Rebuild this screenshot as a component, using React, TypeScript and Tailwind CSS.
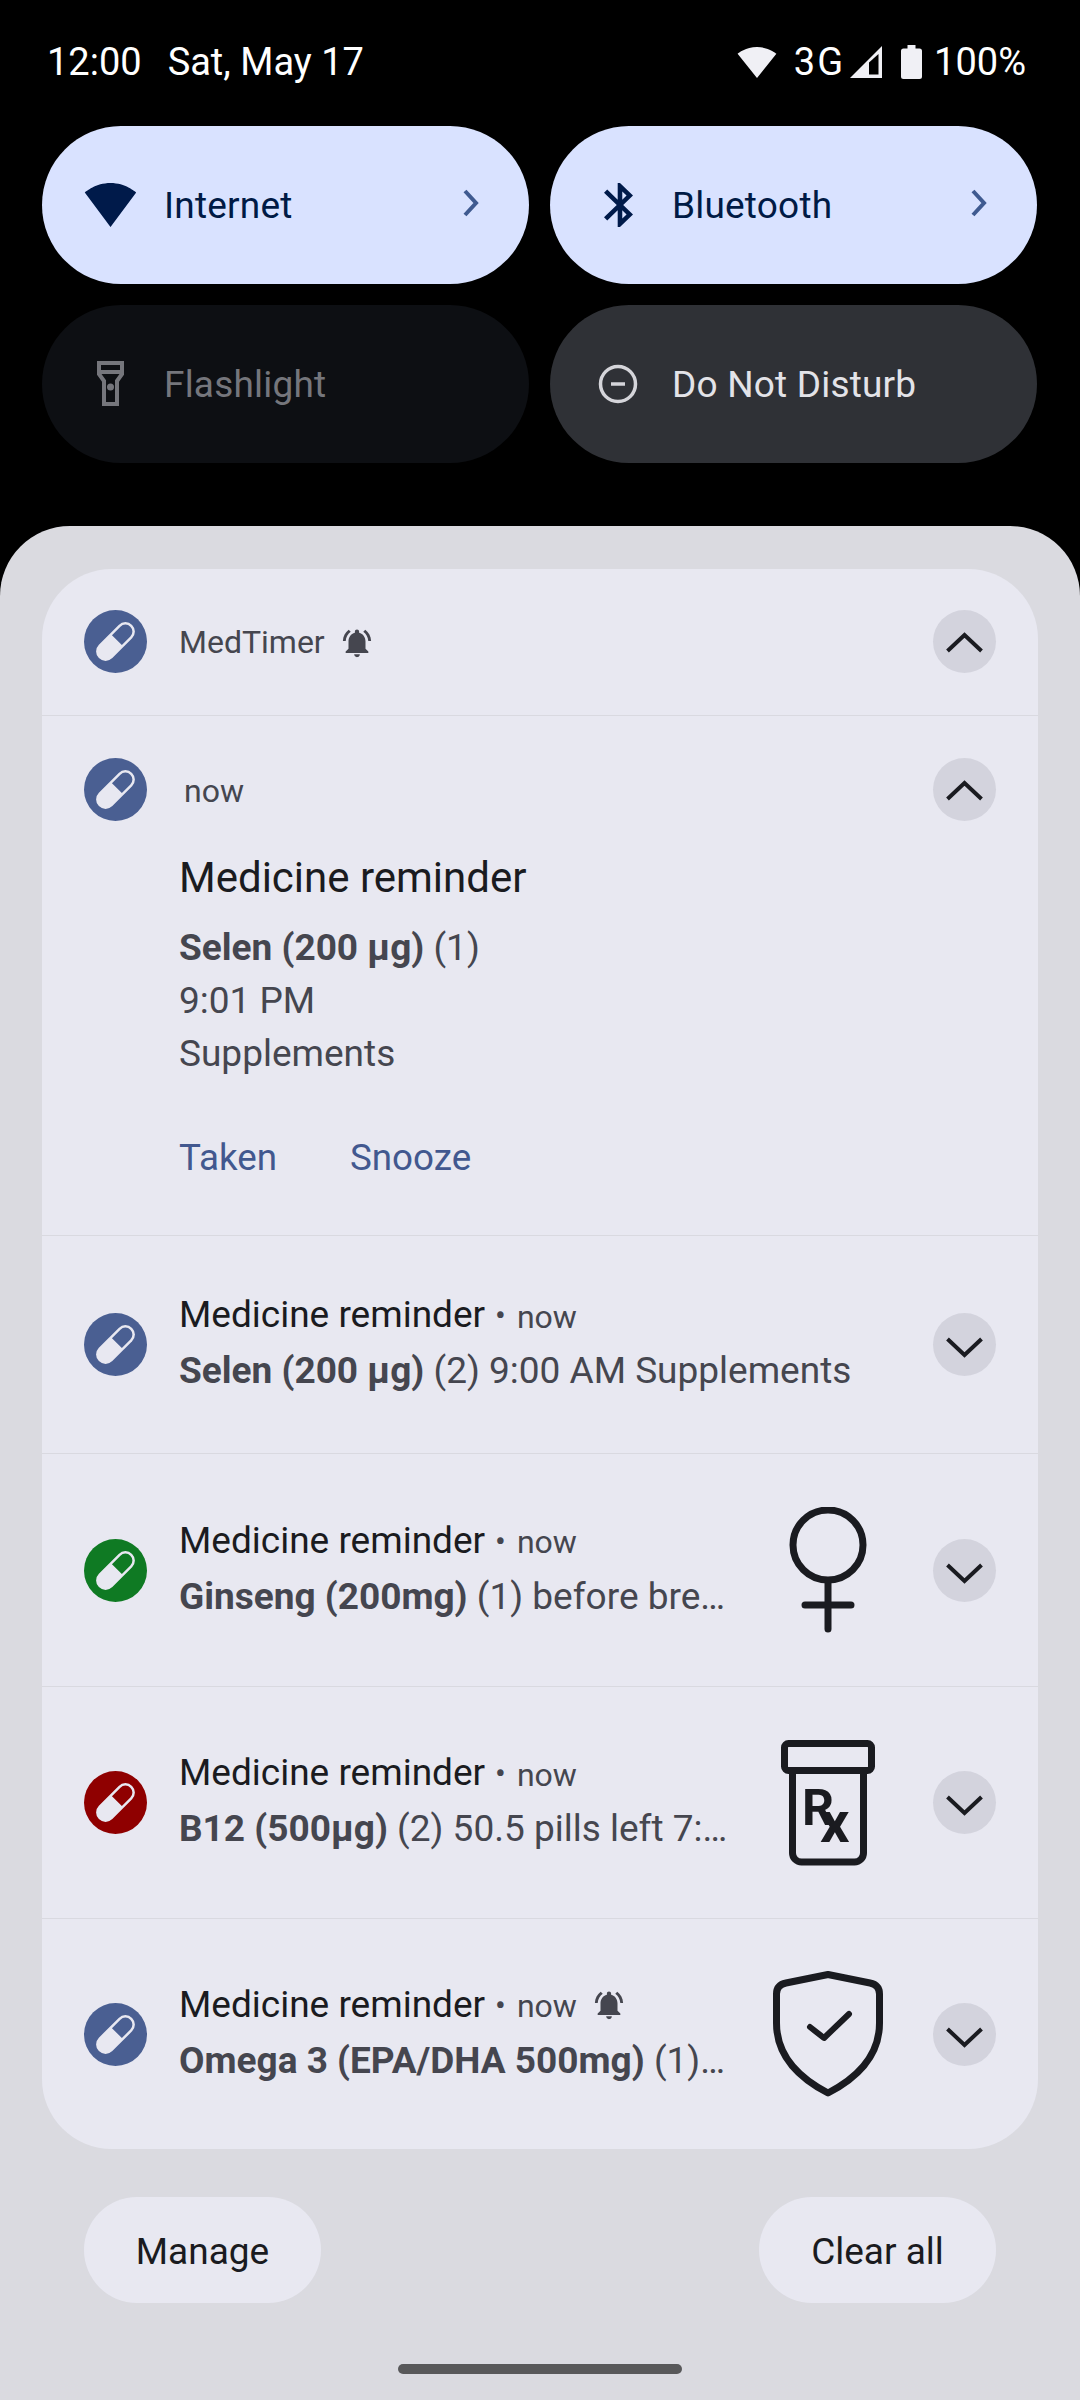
import React from "react";

function Pill({ bg }: { bg: string }) {
  return (
    <svg width="63" height="63" viewBox="0 0 63 63" className="shrink-0 block">
      <circle cx="31.5" cy="31.5" r="31.5" fill={bg} />
      <g transform="rotate(-45 31.5 31.5)">
        <rect x="8" y="22" width="47" height="19" rx="9.5" fill="#e8e8f1" />
        <path d="M33.5 24.5 H45.5 a7 7 0 0 1 0 14 H33.5 Z" fill={bg} />
      </g>
    </svg>
  );
}

function Bell({ size, className }: { size: number; className?: string }) {
  return (
    <svg width={size} height={size} viewBox="0 0 24 24" fill="#45464f" className={className}>
      <path d="M7.58 4.08L6.15 2.65C3.75 4.48 2.17 7.3 2.03 10.5h2c.15-2.65 1.51-4.97 3.55-6.42zm12.39 6.42h2c-.15-3.2-1.73-6.02-4.12-7.85l-1.42 1.43c2.02 1.45 3.39 3.77 3.54 6.42zM18 11c0-3.07-1.64-5.64-4.5-6.32V4c0-.83-.67-1.5-1.5-1.5s-1.5.67-1.5 1.5v.68C7.63 5.36 6 7.92 6 11v5l-2 2v1h16v-1l-2-2v-5zm-6 11c.14 0 .27-.01.4-.04.65-.14 1.18-.58 1.44-1.18.1-.24.15-.5.15-.78h-4c.01 1.1.9 2 2.01 2z" />
    </svg>
  );
}

function Chevron({ up }: { up?: boolean }) {
  return (
    <div className="w-[63px] h-[63px] rounded-full bg-[#d3d3dd] shrink-0 flex items-center justify-center">
      <svg width="63" height="63" viewBox="0 0 63 63" fill="none" stroke="#1a1b20" strokeWidth="4">
        <polyline points={up ? "14.5,41 31.5,25 48.5,41" : "14.5,26 31.5,42 48.5,26"} />
      </svg>
    </div>
  );
}

function Female() {
  return (
    <svg width="126" height="126" viewBox="0 0 126 126" fill="none" stroke="#1a1b20" strokeWidth="7" strokeLinecap="round">
      <circle cx="63" cy="38" r="35" />
      <path d="M63 74 V122 M40 98 H86" />
    </svg>
  );
}

function Rx() {
  return (
    <svg width="126" height="126" viewBox="0 0 126 126" fill="none" stroke="#1a1b20" strokeWidth="7" strokeLinejoin="round">
      <rect x="19.5" y="3.5" width="87" height="27" rx="4" />
      <path d="M27.5 30 V113 a9 9 0 0 0 9 9 H89.5 a9 9 0 0 0 9 -9 V30" />
      <text x="37" y="85" fontFamily="Roboto, sans-serif" fontWeight="700" fontSize="50" fill="#1a1b20" stroke="none">R</text>
      <text x="55" y="102" fontFamily="Roboto, sans-serif" fontWeight="700" fontSize="58" fill="#1a1b20" stroke="none">x</text>
    </svg>
  );
}

function Shield() {
  return (
    <svg width="126" height="126" viewBox="0 0 126 126" fill="none" stroke="#1a1b20" strokeWidth="7" strokeLinecap="round" strokeLinejoin="round">
      <path d="M63 3.5 L105 12 Q114.5 14 114.5 23 V52 C114.5 86 90 108 63 122 C36 108 11.5 86 11.5 52 V23 Q11.5 14 21 12 Z" />
      <polyline points="45,56 59,67 84,43" strokeWidth="6" />
    </svg>
  );
}

type RowProps = {
  h: string;
  color: string;
  bold: string;
  rest: string;
  thumb?: React.ReactNode;
  bell?: boolean;
  last?: boolean;
};

function Row({ h, color, bold, rest, thumb, bell, last }: RowProps) {
  return (
    <div className={`${h} flex items-center pl-[42px] pr-[42px] ${last ? "" : "border-b border-[#d9d9e0]"}`}>
      <Pill bg={color} />
      <div className="ml-[32px] flex-1 min-w-0 pb-[3px]">
        <div className="flex items-center h-[52px]">
          <span className="text-[37px] leading-[52px] text-[#1a1b20]">Medicine reminder</span>
          <span className="text-[32px] leading-[52px] text-[#45464f] ml-[10px]">•</span>
          <span className="text-[32px] leading-[52px] text-[#45464f] ml-[11px] mt-[3px]">now</span>
          {bell && <Bell size={34} className="ml-[15px]" />}
        </div>
        <div className="text-[37px] leading-[52px] text-[#45464f] truncate mt-[4px]">
          <span className="font-bold">{bold}</span> {rest}
        </div>
      </div>
      {thumb && <div className="ml-[35px] mr-[42px] w-[126px] h-[126px] shrink-0">{thumb}</div>}
      {!thumb && <div className="w-[36px] shrink-0" />}
      <Chevron />
    </div>
  );
}

function Tile({
  bg,
  color,
  icon,
  label,
  chevron,
}: {
  bg: string;
  color: string;
  icon: React.ReactNode;
  label: string;
  chevron?: boolean;
}) {
  return (
    <div className={`${bg} h-[158px] rounded-[79px] flex items-center`}>
      <div className="w-[122px] pl-[14px] -mt-[1px] flex items-center justify-center shrink-0">{icon}</div>
      <span className={`text-[37px] leading-[52px] tracking-[0.2px] flex-1 pt-[2px] ${color}`}>{label}</span>
      {chevron && (
        <svg width="18" height="28" viewBox="0 0 18 28" fill="none" stroke="#3f5a90" strokeWidth="4" className="mr-[49px] -mt-[4px]">
          <polyline points="3,2 14,14 3,26" />
        </svg>
      )}
    </div>
  );
}

export default function App() {
  return (
    <div className="w-[1080px] h-[2400px] bg-black overflow-hidden flex flex-col [font-family:Roboto,sans-serif]">
      {/* status bar */}
      <div className="h-[126px] flex items-center pl-[47px] pr-[54px] pb-[2px] text-white text-[38px] leading-[52px] shrink-0">
        <span>12:00</span>
        <span className="ml-[26px]">Sat, May 17</span>
        <div className="ml-auto flex items-center">
          <svg width="40" height="31" viewBox="0 3 24 18.5" preserveAspectRatio="none" fill="#f0f0f5">
            <path d="M12.01 21.49L23.64 7c-.45-.34-4.93-4-11.64-4C5.28 3 .81 6.66.36 7l11.63 14.49.01.01.01-.01z" />
          </svg>
          <span className="ml-[17px] tracking-[2px]">3G</span>
          <svg width="32" height="32" viewBox="0 0 32 32" className="ml-[5px]" fill="none">
            <path d="M0 32 L32 0 V32 Z" fill="#f0f0f5" />
            <path d="M19 16.5 V28.5 H28.5 V8 Z" fill="#000" />
          </svg>
          <svg width="21" height="34" viewBox="0 0 21 34" fill="#f0f0f5" className="ml-[19px]">
            <path d="M6.5 0 H14.5 V3.5 H18.5 Q21 3.5 21 6 V31.5 Q21 34 18.5 34 H2.5 Q0 34 0 31.5 V6 Q0 3.5 2.5 3.5 H6.5 Z" />
          </svg>
          <span className="ml-[12px]">100%</span>
        </div>
      </div>

      {/* quick tiles */}
      <div className="grid grid-cols-2 gap-x-[21px] gap-y-[21px] pl-[42px] pr-[43px] shrink-0">
        <Tile
          bg="bg-[#d9e2ff]"
          color="text-[#001a45]"
          label="Internet"
          chevron
          icon={
            <svg width="53" height="44" viewBox="0 3 24 18.5" preserveAspectRatio="none" fill="#001a4a">
              <path d="M12.01 21.49L23.64 7c-.45-.34-4.93-4-11.64-4C5.28 3 .81 6.66.36 7l11.63 14.49.01.01.01-.01z" />
            </svg>
          }
        />
        <Tile
          bg="bg-[#d9e2ff]"
          color="text-[#001a45]"
          label="Bluetooth"
          chevron
          icon={
            <svg width="29" height="44" viewBox="5 2 12.7 20" preserveAspectRatio="none" fill="#001a4a">
              <path d="M17.71 7.71L12 2h-1v7.59L6.41 5 5 6.41 10.59 12 5 17.59 6.41 19 11 14.41V22h1l5.71-5.71-4.3-4.29 4.3-4.29zM13 5.83l1.88 1.88L13 9.59V5.83zm1.88 10.46L13 18.17v-3.76l1.88 1.88z" />
            </svg>
          }
        />
        <Tile
          bg="bg-[#0d0f13]"
          color="text-[#75767c]"
          label="Flashlight"
          icon={
            <svg width="27" height="45" viewBox="0 0 27 45" fill="none" stroke="#75767c" strokeWidth="4">
              <path d="M2 2 H25 V13 L20 20 V43 H7 V20 L2 13 Z M2 11 H25" />
              <circle cx="13.5" cy="26" r="3.5" fill="#75767c" stroke="none" />
            </svg>
          }
        />
        <Tile
          bg="bg-[#2f3136]"
          color="text-[#e3e3e8]"
          label="Do Not Disturb"
          icon={
            <svg width="40" height="40" viewBox="0 0 40 40" fill="none" stroke="#d5d5da" strokeWidth="3.5">
              <circle cx="20" cy="20" r="17.5" />
              <path d="M13 20 H27" />
            </svg>
          }
        />
      </div>

      {/* notification shade */}
      <div className="mt-[63px] flex-1 bg-[#dadae0] rounded-t-[70px] px-[42px] pt-[43px] flex flex-col relative">
        <div className="bg-[#e8e8f1] rounded-[70px] flex flex-col">
          {/* group header */}
          <div className="h-[147px] flex items-start pl-[42px] pr-[42px] pt-[41px] border-b border-[#d9d9e0]">
            <Pill bg="#4a5f92" />
            <span className="ml-[32px] text-[32px] leading-[63px] text-[#45464f] mt-[1px]">MedTimer</span>
            <Bell size={34} className="ml-[15px] mt-[16px]" />
            <div className="ml-auto">
              <Chevron up />
            </div>
          </div>

          {/* expanded */}
          <div className="h-[520px] flex items-start pl-[42px] pr-[42px] pt-[42px] border-b border-[#d9d9e0]">
            <Pill bg="#4a5f92" />
            <div className="ml-[32px] flex-1 min-w-0">
              <div className="text-[32px] leading-[63px] text-[#45464f] ml-[5px] mt-[2px]">now</div>
              <div className="text-[42px] leading-[56px] text-[#1a1b20] mt-[27px]">Medicine reminder</div>
              <div className="text-[37px] leading-[53px] text-[#45464f] mt-[15px]">
                <div>
                  <span className="font-bold">Selen (200 µg)</span> (1)
                </div>
                <div>9:01 PM</div>
                <div>Supplements</div>
              </div>
              <div className="flex text-[36.75px] leading-[52px] text-[#42588f] mt-[52px]">
                <span>Taken</span>
                <span className="ml-[73px]">Snooze</span>
              </div>
            </div>
            <Chevron up />
          </div>

          <Row h="h-[218px]" color="#4a5f92" bold="Selen (200 µg)" rest="(2) 9:00 AM Supplements" />
          <Row h="h-[233px]" color="#0f7a23" bold="Ginseng (200mg)" rest="(1) before breakfast" thumb={<Female />} />
          <Row h="h-[232px]" color="#8f0000" bold="B12 (500µg)" rest="(2) 50.5 pills left 7:30 AM" thumb={<Rx />} />
          <Row h="h-[230px]" color="#4a5f92" bold="Omega 3 (EPA/DHA 500mg)" rest="(1) 8:00 AM" thumb={<Shield />} bell last />
        </div>

        {/* footer */}
        <div className="flex justify-between px-[42px] mt-[48px]">
          <div className="w-[237px] h-[106px] rounded-[53px] bg-[#e8e8f1] flex items-center justify-center pt-[3px] text-[37px] text-[#1a1b20]">Manage</div>
          <div className="w-[237px] h-[106px] rounded-[53px] bg-[#e8e8f1] flex items-center justify-center pt-[3px] text-[37px] text-[#1a1b20]">Clear all</div>
        </div>
        <div className="w-[284px] h-[10px] rounded-full bg-[#58585a] self-center mt-[61px]" />
      </div>
    </div>
  );
}
